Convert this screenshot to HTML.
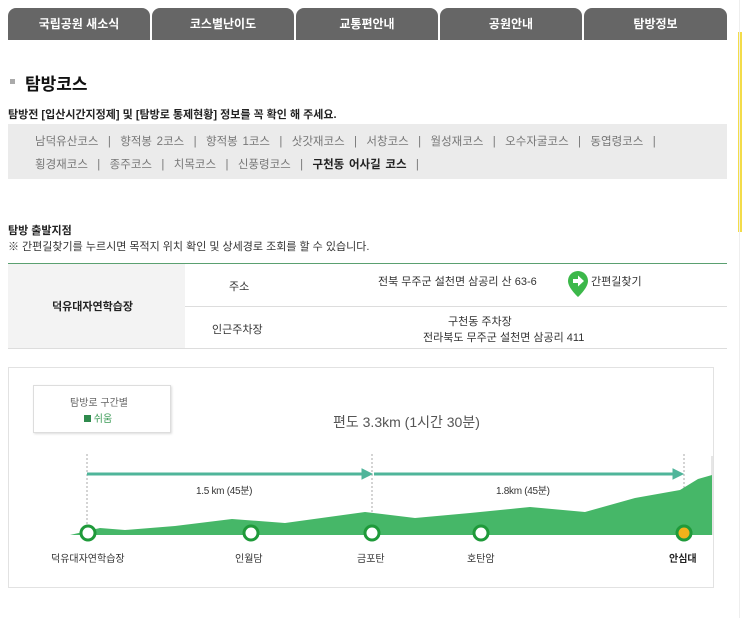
<!DOCTYPE html>
<html><head><meta charset="utf-8"><style>
body{margin:0;width:743px;height:618px;background:#fff;font-family:"Liberation Sans","Noto Sans CJK KR",sans-serif;position:relative;overflow:hidden;color:#333}
.a{position:absolute}
.tab{position:absolute;top:8px;height:32px;background:#666;color:#fff;font-size:12px;font-weight:bold;text-align:center;line-height:32px;border-radius:8px 8px 0 0}
</style></head><body>
<div class="tab" style="left:8px;width:142px">국립공원 새소식</div>
<div class="tab" style="left:152px;width:142px">코스별난이도</div>
<div class="tab" style="left:296px;width:142px">교통편안내</div>
<div class="tab" style="left:440px;width:142px">공원안내</div>
<div class="tab" style="left:584px;width:143px">탐방정보</div>
<div class="a" style="left:738px;top:32px;width:4px;height:200px;background:#f3dc4a"></div>
<div class="a" style="left:739px;top:0;width:1px;height:618px;background:#eee"></div>

<div class="a" style="left:10px;top:79px;width:5px;height:5px;background:#aaa"></div>
<div class="a" style="left:25px;top:70px;font-size:17px;font-weight:bold;color:#111">탐방코스</div>
<div class="a" style="left:8px;top:106px;font-size:11px;font-weight:bold;color:#222">탐방전 [입산시간지정제] 및 [탐방로 통제현황] 정보를 꼭 확인 해 주세요.</div>
<div class="a" style="left:8px;top:124px;width:719px;height:55px;background:#ebebeb"></div>
<div class="a" style="left:35px;top:133px;font-size:11.5px;color:#777;word-spacing:1.5px;white-space:nowrap">남덕유산코스 &nbsp;|&nbsp; 향적봉 2코스 &nbsp;|&nbsp; 향적봉 1코스 &nbsp;|&nbsp; 삿갓재코스 &nbsp;|&nbsp; 서창코스 &nbsp;|&nbsp; 월성재코스 &nbsp;|&nbsp; 오수자굴코스 &nbsp;|&nbsp; 동엽령코스 &nbsp;|</div>
<div class="a" style="left:35px;top:156px;font-size:11.5px;color:#777;word-spacing:1.5px;white-space:nowrap">횡경재코스 &nbsp;|&nbsp; 종주코스 &nbsp;|&nbsp; 치목코스 &nbsp;|&nbsp; 신풍령코스 &nbsp;|&nbsp; <b style="color:#222">구천동 어사길 코스</b> &nbsp;|</div>

<div class="a" style="left:8px;top:222px;font-size:11px;font-weight:bold;color:#222">탐방 출발지점</div>
<div class="a" style="left:8px;top:238px;font-size:11px;color:#333">※ 간편길찾기를 누르시면 목적지 위치 확인 및 상세경로 조회를 할 수 있습니다.</div>
<div class="a" style="left:8px;top:263px;width:719px;height:1px;background:#5aa070"></div>
<div class="a" style="left:8px;top:264px;width:177px;height:84px;background:#f3f3f3"></div>
<div class="a" style="left:185px;top:306px;width:542px;height:1px;background:#ddd"></div>
<div class="a" style="left:8px;top:348px;width:719px;height:1px;background:#ddd"></div>
<div class="a" style="left:52px;top:298px;font-size:11px;font-weight:bold;color:#222">덕유대자연학습장</div>
<div class="a" style="left:229px;top:278px;font-size:11px">주소</div>
<div class="a" style="left:212px;top:321px;font-size:11px">인근주차장</div>
<div class="a" style="left:378px;top:273px;font-size:11px">전북 무주군 설천면 삼공리 산 63-6</div>
<svg class="a" style="left:567px;top:270px" width="22" height="28" viewBox="0 0 22 28"><path d="M11 1a10 10 0 0 0-10 10c0 7 10 16 10 16s10-9 10-16A10 10 0 0 0 11 1z" fill="#3cb84a"/><path d="M6 9h5V5.5l6 5.5-6 5.5V13H6z" fill="#fff"/></svg>
<div class="a" style="left:591px;top:273px;font-size:11px">간편길찾기</div>
<div class="a" style="left:448px;top:313px;font-size:11px">구천동 주차장</div>
<div class="a" style="left:423px;top:329px;font-size:11px">전라북도 무주군 설천면 삼공리 411</div>

<div class="a" style="left:8px;top:367px;width:704px;height:219px;border:1px solid #e2e2e2"></div>
<div class="a" style="left:33px;top:385px;width:136px;height:46px;border:1px solid #ddd;box-shadow:1px 1px 2px #ddd"></div>
<div class="a" style="left:70px;top:394px;font-size:10px;color:#666">탐방로 구간별</div>
<div class="a" style="left:84px;top:410px;font-size:10px;color:#3a9a55"><span style="display:inline-block;width:7px;height:7px;background:#2f8a4d"></span> 쉬움</div>
<div class="a" style="left:333px;top:412px;font-size:14px;color:#555">편도 3.3km (1시간 30분)</div>
<svg class="a" style="left:0;top:360px" width="743" height="258">
<g stroke="#aaa" stroke-dasharray="2,2"><line x1="87" y1="94" x2="87" y2="172"/><line x1="372" y1="94" x2="372" y2="172"/><line x1="684" y1="94" x2="684" y2="172"/></g>
<line x1="712" y1="96" x2="712" y2="175" stroke="#ccc"/>
<path d="M40 175L70 175 L100 168 L125 170 L175 166 L232 159 L285 163 L365 152 L415 158 L470 153 L530 147 L585 152 L635 138 L680 130 L698 119 L712 115 L712 175Z" fill="#46b768"/>
<g fill="#4fb59a" stroke="#4fb59a"><line x1="87" y1="114" x2="364" y2="114" stroke-width="3"/><path d="M362 109L372 114L362 119Z"/><line x1="374" y1="114" x2="675" y2="114" stroke-width="3"/><path d="M673 109L683 114L673 119Z"/></g>
<g fill="#fff" stroke="#1f9a3a" stroke-width="3"><circle cx="88" cy="173" r="7"/><circle cx="251" cy="173" r="7"/><circle cx="372" cy="173" r="7"/><circle cx="481" cy="173" r="7"/><circle cx="684" cy="173" r="7" fill="#f2b21b"/></g>
</svg>
<div class="a" style="left:196px;top:482px;font-size:10px;color:#333;letter-spacing:-0.3px">1.5 km (45분)</div>
<div class="a" style="left:496px;top:482px;font-size:10px;color:#333;letter-spacing:-0.3px">1.8km (45분)</div>
<div class="a" style="left:51px;top:550px;font-size:10px;color:#333">덕유대자연학습장</div>
<div class="a" style="left:235px;top:550px;font-size:10px;color:#333">인월담</div>
<div class="a" style="left:357px;top:550px;font-size:10px;color:#333">금포탄</div>
<div class="a" style="left:467px;top:550px;font-size:10px;color:#333">호탄암</div>
<div class="a" style="left:669px;top:550px;font-size:10px;font-weight:bold;color:#222">안심대</div>
</body></html>
